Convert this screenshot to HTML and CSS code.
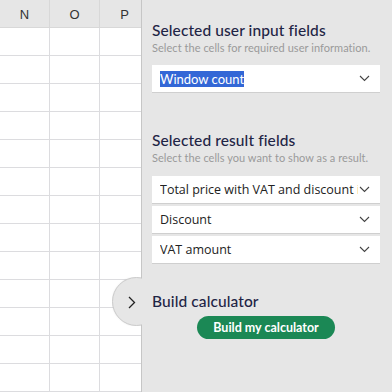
FILE: index.html
```html
<!DOCTYPE html>
<html>
<head>
<meta charset="utf-8">
<link rel="stylesheet" href="styles.css">
</head>
<body>
<div class="app">
  <div class="sheet">
    <div class="row head">
      <div class="cell">N</div><div class="cell">O</div><div class="cell">P</div>
    </div>
    <div class="row"><div class="cell"></div><div class="cell"></div><div class="cell"></div></div>
    <div class="row"><div class="cell"></div><div class="cell"></div><div class="cell"></div></div>
    <div class="row"><div class="cell"></div><div class="cell"></div><div class="cell"></div></div>
    <div class="row"><div class="cell"></div><div class="cell"></div><div class="cell"></div></div>
    <div class="row"><div class="cell"></div><div class="cell"></div><div class="cell"></div></div>
    <div class="row"><div class="cell"></div><div class="cell"></div><div class="cell"></div></div>
    <div class="row"><div class="cell"></div><div class="cell"></div><div class="cell"></div></div>
    <div class="row"><div class="cell"></div><div class="cell"></div><div class="cell"></div></div>
    <div class="row"><div class="cell"></div><div class="cell"></div><div class="cell"></div></div>
    <div class="row"><div class="cell"></div><div class="cell"></div><div class="cell"></div></div>
    <div class="row"><div class="cell"></div><div class="cell"></div><div class="cell"></div></div>
    <div class="row"><div class="cell"></div><div class="cell"></div><div class="cell"></div></div>
    <div class="row"><div class="cell"></div><div class="cell"></div><div class="cell"></div></div>
  </div>
  <div class="panel">
    <h2 class="title">Selected user input fields</h2>
    <p class="sub">Select the cells for required user information.</p>
    <div class="select first"><span class="val"><span class="hl">Window count</span></span><svg class="chev" width="11" height="7" viewBox="0 0 11 7"><path d="M1 1l4.5 4.5L10 1" fill="none" stroke="#444" stroke-width="1.1"/></svg></div>

    <h2 class="title t2">Selected result fields</h2>
    <p class="sub">Select the cells you want to show as a result.</p>
    <div class="list">
      <div class="select"><span class="val">Total price with VAT and discount included</span><svg class="chev" width="11" height="7" viewBox="0 0 11 7"><path d="M1 1l4.5 4.5L10 1" fill="none" stroke="#444" stroke-width="1.1"/></svg></div>
      <div class="select"><span class="val">Discount</span><svg class="chev" width="11" height="7" viewBox="0 0 11 7"><path d="M1 1l4.5 4.5L10 1" fill="none" stroke="#444" stroke-width="1.1"/></svg></div>
      <div class="select"><span class="val">VAT amount</span><svg class="chev" width="11" height="7" viewBox="0 0 11 7"><path d="M1 1l4.5 4.5L10 1" fill="none" stroke="#444" stroke-width="1.1"/></svg></div>
    </div>

    <h2 class="title t3">Build calculator</h2>
    <div class="btnrow"><button class="btn">Build my calculator</button></div>
  </div>
  <div class="tab"><div class="circle"></div><svg class="tabchev" width="8" height="13" viewBox="0 0 8 13"><path d="M1 1l5.5 5.5L1 12" fill="none" stroke="#222" stroke-width="1.3"/></svg></div>
</div>
</body>
</html>
```
FILE: styles.css
```css
* { box-sizing: border-box; }
html, body { margin: 0; padding: 0; }
body { width: 392px; height: 392px; overflow: hidden; background: #fff; }
.app { position: relative; display: flex; width: 392px; height: 392px; }
.sheet { width: 141px; flex: none; overflow: hidden; background: #fff; }
.row { display: grid; grid-template-columns: 50px 50px 50px; height: 28px; width: 150px; }
.cell { border-right: 1px solid #dcdcdf; border-bottom: 1px solid #dcdcdf; }
.head { background: #e6e6e6; }
.head .cell { display: flex; align-items: center; justify-content: center; font-family: "Liberation Sans", Arial, sans-serif; font-size: 13px; color: #333; border-color: #d8d8d8; padding-top: 1px; }
.panel { width: 251px; min-width: 0; flex: none; background: #e6e6e6; border-left: 1px solid #c6c6c6; padding: 20px 12px 0 10px; font-family: Lato, "Open Sans", sans-serif; }
.title { margin: 0; font-size: 15.5px; line-height: 20px; font-weight: 500; color: #1e2445; letter-spacing: 0.1px; }
.t2 { margin-top: 37px; }
.t3 { margin-top: 27px; }
.sub { margin: 1px 0 0; font-size: 11px; line-height: 13px; color: #9a9a9a; letter-spacing: 0.05px; }
.select { display: flex; align-items: center; height: 28px; min-width: 0; background: #fff; border-bottom: 1px solid #cfcfcf; padding: 0 10px 0 8px; font-family: "Open Sans", "Noto Sans", sans-serif; font-size: 12.5px; color: #222; }
.select.first { margin-top: 11px; font-family: Lato, sans-serif; font-size: 13px; }
.val { flex: 1; white-space: nowrap; overflow: hidden; min-width: 0; }
.hl { background: #3367d6; color: #fff; padding: 1px 0 1px; }
.chev { flex: none; margin-left: 1px; }
.list { margin-top: 12px; display: flex; flex-direction: column; gap: 2px; }
.btnrow { display: flex; justify-content: center; margin-top: 5px; }
.btn { width: 138px; height: 23px; border: none; border-radius: 12px; background: #1b8855; color: #fff; font-family: Lato, sans-serif; font-weight: 700; font-size: 12.5px; padding: 0; }
.tab { position: absolute; left: 112px; top: 277px; width: 30px; height: 49px; overflow: hidden; }
.circle { width: 49px; height: 49px; border-radius: 50%; background: #e6e6e6; border: 1px solid #cbcbcb; box-shadow: 0 0 2px rgba(0,0,0,0.08); }
.tabchev { position: absolute; left: 16px; top: 19px; }
```
